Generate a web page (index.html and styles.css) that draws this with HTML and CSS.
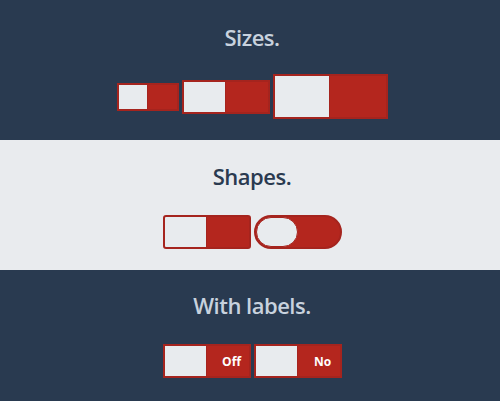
FILE: index.html
```html
<!DOCTYPE html>
<html>
<head>
<meta charset="utf-8">
<link rel="stylesheet" href="styles.css">
</head>
<body>
<section class="band dark first">
  <h2 class="title">Sizes.</h2>
  <div class="row">
    <div class="toggle sm"><span class="knob"></span><span class="side"></span></div>
    <div class="toggle md"><span class="knob"></span><span class="side"></span></div>
    <div class="toggle lg"><span class="knob"></span><span class="side"></span></div>
  </div>
</section>
<section class="band light second">
  <h2 class="title">Shapes.</h2>
  <div class="row">
    <div class="toggle md rect"><span class="knob"></span><span class="side"></span></div>
    <div class="toggle md pill"><span class="knob"></span><span class="side"></span></div>
  </div>
</section>
<section class="band dark third">
  <h2 class="title">With labels.</h2>
  <div class="row">
    <div class="toggle md"><span class="knob"></span><span class="side">Off</span></div>
    <div class="toggle md"><span class="knob"></span><span class="side">No</span></div>
  </div>
</section>
</body>
</html>
```
FILE: styles.css
```css
html, body {
  margin: 0;
  padding: 0;
}
body {
  font-family: "Open Sans", "DejaVu Sans", sans-serif;
  background: #293a50;
}
.band {
  padding-left: 4px;
  display: flex;
  flex-direction: column;
  align-items: center;
}
.dark {
  background: #293a50;
}
.light {
  background: #e9ebee;
}
.title {
  margin: 0;
  font-size: 22px;
  font-weight: 600;
  line-height: 30px;
  letter-spacing: -0.5px;
}
.dark .title {
  color: #c8d2de;
}
.light .title {
  color: #2a3a50;
}
.first {
  height: 140px;
  box-sizing: border-box;
  padding-top: 22px;
}
.first .title {
  margin-bottom: 22px;
}
.second {
  height: 130px;
  box-sizing: border-box;
  padding-top: 21px;
}
.second .title {
  margin-bottom: 24px;
}
.third {
  height: 131px;
  box-sizing: border-box;
  padding-top: 20px;
}
.third .title {
  margin-bottom: 24px;
}
.row {
  display: flex;
  align-items: center;
  gap: 3px;
}
.toggle {
  display: flex;
  box-sizing: border-box;
  border: 2px solid #a5241e;
  background: #b4261e;
  overflow: hidden;
}
.knob {
  width: 50%;
  height: 100%;
  box-sizing: border-box;
  background: #e8ebee;
  border-right: 1px solid #a5241e;
}
.side {
  width: 50%;
  display: flex;
  align-items: center;
  justify-content: center;
  padding-left: 8px;
  box-sizing: border-box;
  color: #ffffff;
  font-weight: 700;
  font-size: 12px;
  font-family: "Open Sans", "DejaVu Sans", sans-serif;
}
.sm {
  width: 62px;
  height: 28px;
}
.md {
  width: 88px;
  height: 34px;
}
.lg {
  width: 115px;
  height: 45px;
}
.rect {
  border-radius: 3px;
}
.pill {
  border-radius: 17px;
}
.pill .knob {
  border-radius: 17px;
  border: 1px solid #a5241e;
}
```
